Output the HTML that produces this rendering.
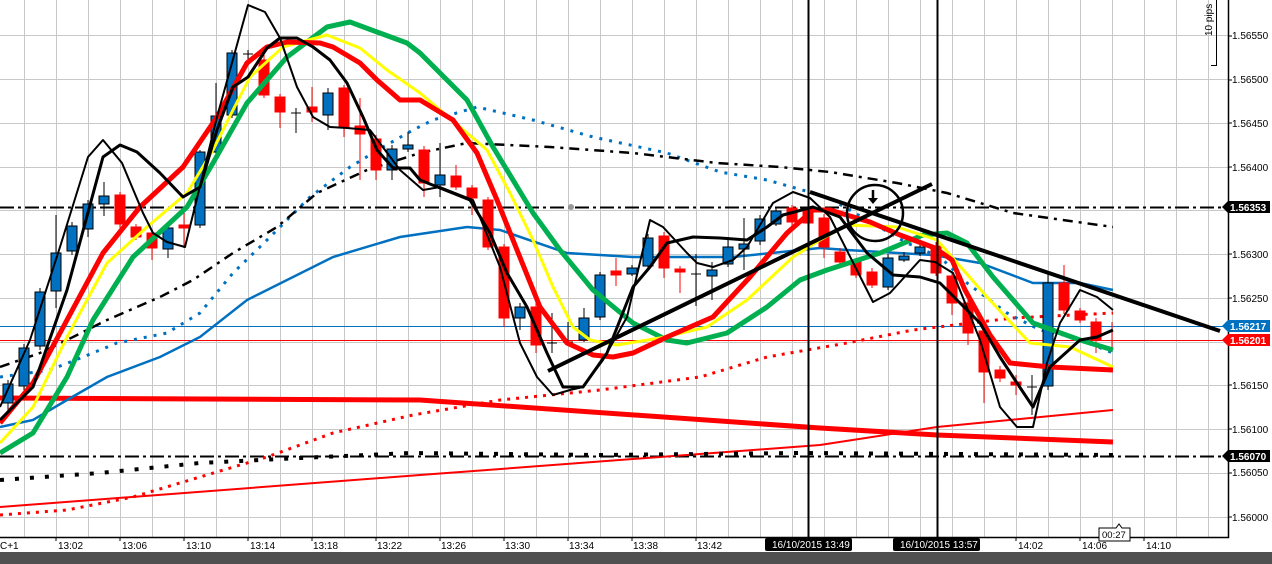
<!DOCTYPE html>
<html><head><meta charset="utf-8"><style>
html,body{margin:0;padding:0;background:#fff;width:1272px;height:564px;overflow:hidden}
svg{display:block;font-family:"Liberation Sans",sans-serif}
</style></head><body>
<svg width="1272" height="564" viewBox="0 0 1272 564" xmlns="http://www.w3.org/2000/svg">
<rect width="1272" height="564" fill="#fff"/>
<!-- grid -->
<g stroke="#c8c8c8" stroke-width="1">
<path d="M24.5 0V537M56.5 0V537M88.5 0V537M120.5 0V537M152.5 0V537M184.5 0V537M216.5 0V537M248.5 0V537M280.5 0V537M312.5 0V537M344.5 0V537M376.5 0V537M408.5 0V537M440.5 0V537M472.5 0V537M504.5 0V537M536.5 0V537M568.5 0V537M600.5 0V537M632.5 0V537M664.5 0V537M696.5 0V537M728.5 0V537M760.5 0V537M792.5 0V537M824.5 0V537M856.5 0V537M888.5 0V537M920.5 0V537M952.5 0V537M984.5 0V537M1016.5 0V537M1048.5 0V537M1080.5 0V537M1112.5 0V537M1144.5 0V537M1176.5 0V537M1208.5 0V537"/>
<path d="M0 35.5H1228M0 79.5H1228M0 123.5H1228M0 167.5H1228M0 210.5H1228M0 254.5H1228M0 298.5H1228M0 342.5H1228M0 385.5H1228M0 429.5H1228M0 473.5H1228M0 517.5H1228"/>
</g>
<!-- horizontal level lines -->
<path d="M0 207.5H1228" stroke="#000" stroke-width="2" stroke-dasharray="14 4 3 4"/>
<path d="M0 456.5H1228" stroke="#000" stroke-width="2" stroke-dasharray="14 4 3 4"/>
<path d="M0 326.5H1228" stroke="#0070c0" stroke-width="1"/>
<path d="M0 340.5H1228" stroke="#ff0000" stroke-width="1"/>
<circle cx="571" cy="207" r="3" fill="#999"/>
<!-- red thin rising, red thick flat -->
<polyline fill="none" stroke="#ff0000" stroke-width="2" points="0,507 420,475 820,445 937,427 1113,410"/>
<polyline fill="none" stroke="#ff0000" stroke-width="5" points="0,398 420,400 820,428 937,435 1113,442"/>
<!-- red dotted -->
<polyline fill="none" stroke="#ff0000" stroke-width="3" stroke-dasharray="3 6" points="0,515 67,510 133,497 200,477 267,457 333,433 413,415 500,400 600,390 700,377 767,357 847,343 913,330 1013,318 1113,313"/>
<!-- black square dotted -->
<polyline fill="none" stroke="#000" stroke-width="4" stroke-dasharray="4 11" points="0,480 100,473 200,463 300,458 410,453 600,455 800,453 1113,455"/>
<!-- blue solid MA -->
<polyline fill="none" stroke="#0070c0" stroke-width="2.5" points="0,427 33,420 67,400 107,377 160,357 200,337 247,300 333,257 400,237 467,227 500,230 567,253 633,257 733,257 820,248 847,250 933,255 980,263 1033,283 1080,283 1113,290"/>
<!-- blue dotted -->
<polyline fill="none" stroke="#0070c0" stroke-width="3" stroke-dasharray="3 7" points="0,377 50,370 83,357 117,343 167,333 200,313 233,273 267,240 310,197 350,167 383,147 413,130 433,120 477,107 533,120 593,137 667,153 720,172 767,180 827,197 867,220 907,243 940,257 967,283 1007,313 1040,330 1073,337 1113,353"/>
<!-- black dashed -->
<polyline fill="none" stroke="#000" stroke-width="2.5" stroke-dasharray="10 6 3 6" points="0,367 40,353 67,340 107,320 160,297 193,280 233,253 277,227 317,193 367,170 420,153 467,143 550,147 633,153 717,163 780,167 830,172 897,183 947,193 1013,213 1113,227"/>
<!-- candles -->
<g stroke-width="1">
<g stroke="#000" fill="#0070c0">
<path d="M8 380V410M24 344V390M40 288V350M56 215V308M72 222V255M88 200V237M104 182V216M168 224V258M200 150V228M216 83V155M232 50V118M328 88V130M392 145V180M408 132V152M440 143V197M520 303V330M584 308V342M600 272V320M632 265V276M648 234V270M712 262V300M728 237V267M744 218V270M760 215V245M776 208V226M888 254V290M904 252V262M920 244V256M1048 272V390"/>
<rect x="3" y="384" width="10" height="19"/><rect x="19" y="348" width="10" height="38"/><rect x="35" y="292" width="10" height="54"/><rect x="51" y="253" width="10" height="38"/><rect x="67" y="226" width="10" height="25"/><rect x="83" y="204" width="10" height="25"/><rect x="99" y="196" width="10" height="8"/><rect x="163" y="228" width="10" height="21"/><rect x="195" y="152" width="10" height="73"/><rect x="211" y="116" width="10" height="36"/><rect x="227" y="53" width="10" height="62"/><rect x="323" y="93" width="10" height="22"/><rect x="387" y="149" width="10" height="21"/><rect x="403" y="145" width="10" height="4"/><rect x="435" y="175" width="10" height="10"/><rect x="515" y="307" width="10" height="11"/><rect x="579" y="318" width="10" height="22"/><rect x="595" y="275" width="10" height="42"/><rect x="627" y="268" width="10" height="6"/><rect x="643" y="238" width="10" height="28"/><rect x="707" y="270" width="10" height="6"/><rect x="723" y="247" width="10" height="17"/><rect x="739" y="244" width="10" height="5"/><rect x="755" y="219" width="10" height="22"/><rect x="771" y="211" width="10" height="13"/><rect x="883" y="258" width="10" height="29"/><rect x="899" y="256" width="10" height="4"/><rect x="915" y="247" width="10" height="6"/><rect x="1043" y="283" width="10" height="103"/>
</g>
<g stroke="#ff0000" fill="#ff0000">
<path d="M120 192V228M136 224V240M152 230V260M184 213V248M264 55V98M280 94V128M312 87V122M344 85V137M360 98V180M376 135V180M424 146V197M456 165V190M472 185V215M488 197V250M504 244V327M536 303V353M616 258V286M664 232V278M680 266V293M792 205V226M808 207V226M824 214V258M840 248V265M856 258V278M872 268V288M936 242V276M952 272V315M968 300V345M984 328V403M1000 366V382M1016 375V395M1064 265V314M1080 308V323M1096 318V353M1112 322V352"/>
<rect x="115" y="195" width="10" height="29"/><rect x="131" y="227" width="10" height="10"/><rect x="147" y="233" width="10" height="15"/><rect x="179" y="225" width="10" height="3"/><rect x="259" y="60" width="10" height="35"/><rect x="275" y="97" width="10" height="15"/><rect x="307" y="107" width="10" height="5"/><rect x="339" y="88" width="10" height="39"/><rect x="355" y="126" width="10" height="8"/><rect x="371" y="139" width="10" height="31"/><rect x="419" y="150" width="10" height="33"/><rect x="451" y="176" width="10" height="11"/><rect x="467" y="188" width="10" height="10"/><rect x="483" y="200" width="10" height="47"/><rect x="499" y="247" width="10" height="71"/><rect x="531" y="307" width="10" height="38"/><rect x="611" y="271" width="10" height="4"/><rect x="659" y="236" width="10" height="32"/><rect x="675" y="269" width="10" height="3"/><rect x="787" y="208" width="10" height="14"/><rect x="803" y="210" width="10" height="13"/><rect x="819" y="218" width="10" height="29"/><rect x="835" y="252" width="10" height="10"/><rect x="851" y="262" width="10" height="13"/><rect x="867" y="272" width="10" height="13"/><rect x="931" y="246" width="10" height="27"/><rect x="947" y="276" width="10" height="27"/><rect x="963" y="303" width="10" height="30"/><rect x="979" y="331" width="10" height="41"/><rect x="995" y="370" width="10" height="8"/><rect x="1011" y="382" width="10" height="3"/><rect x="1059" y="283" width="10" height="27"/><rect x="1075" y="311" width="10" height="9"/><rect x="1091" y="322" width="10" height="18"/>
</g>
<g stroke="#000"><path d="M243 54H253M248 50V60M291 113H301M296 108V133M547 343H557M552 313V353M563 342H573M568 322V342M691 274H701M696 254V306M1027 387H1037M1032 375V415"/></g>
</g>
<!-- MAs -->
<polyline fill="none" stroke="#00b050" stroke-width="5" stroke-linejoin="round" points="0,453 33,433 67,377 93,320 133,257 187,207 213,163 247,103 287,57 327,27 350,22 377,32 407,43 420,53 467,100 493,147 533,213 560,250 593,290 633,323 667,340 687,343 727,333 767,307 800,280 827,270 880,253 923,235 947,233 967,243 993,277 1033,323 1080,340 1113,350"/>
<polyline fill="none" stroke="#ffff00" stroke-width="3" stroke-linejoin="round" points="0,443 33,407 67,337 107,263 147,227 187,193 213,150 233,110 250,77 283,47 327,35 360,48 387,70 420,93 467,133 487,150 510,193 533,240 553,287 573,327 590,340 617,345 660,338 707,327 747,300 793,257 820,240 847,225 897,227 937,240 987,297 1030,343 1070,347 1113,367"/>
<polyline fill="none" stroke="#ff0000" stroke-width="5" stroke-linejoin="round" points="0,423 33,383 67,320 103,253 140,207 183,167 217,117 247,63 267,47 287,42 320,43 333,47 360,63 377,80 400,100 420,100 453,120 477,153 497,200 517,250 540,307 567,343 593,355 613,357 633,353 667,337 713,317 750,277 787,233 813,210 830,210 870,222 900,235 935,248 952,260 965,290 990,335 1010,363 1050,367 1113,370"/>
<!-- black zigzags -->
<polyline fill="none" stroke="#000" stroke-width="2" stroke-linejoin="round" points="0,407 30,340 60,247 88,157 103,140 122,163 143,213 153,233 167,242 185,247 217,117 248,5 265,12 280,38 297,87 313,117 330,127 347,128 370,130 400,170 423,190 440,187 473,200 500,267 520,343 537,377 553,395 570,390 583,387 603,360 627,317 650,220 663,227 687,253 697,263 713,267 733,260 747,247 773,203 793,192 810,198 830,217 873,302 890,293 920,260 935,262 953,273 980,340 1000,407 1017,427 1033,427 1047,363 1060,323 1080,290 1097,297 1113,310"/>
<polyline fill="none" stroke="#000" stroke-width="3" stroke-linejoin="round" points="0,420 33,387 67,290 103,157 120,145 137,152 160,173 183,197 200,187 217,130 233,87 248,77 267,48 280,38 297,38 313,47 330,60 347,83 363,117 377,150 393,168 410,168 420,180 470,200 490,233 507,273 527,307 547,353 563,387 583,387 607,353 633,287 650,267 667,243 693,237 720,238 747,240 767,227 783,215 813,207 840,217 867,253 893,275 920,277 940,283 960,303 980,323 1000,357 1017,383 1033,407 1050,367 1080,340 1097,337 1113,330"/>
<!-- trend lines -->
<path d="M548 371L932 184" stroke="#000" stroke-width="4"/>
<path d="M810 192L1220 331" stroke="#000" stroke-width="4"/>
<circle cx="875" cy="213" r="28" fill="none" stroke="#000" stroke-width="2.5"/>
<path d="M873 190V200" stroke="#000" stroke-width="2.5"/><path d="M868 198L873 204L878 198Z" fill="#000"/>
<!-- vertical lines -->
<path d="M808.5 0V537M937.5 0V537" stroke="#000" stroke-width="2"/>
<!-- axes -->
<rect x="1229" y="0" width="43" height="552" fill="#fff"/>
<rect x="0" y="538" width="1229" height="14" fill="#fff"/>
<path d="M1228.5 0V537.5H0" stroke="#000" stroke-width="1.5" fill="none"/>
<path d="M1211 65.5H1216.5V0" stroke="#000" fill="none"/>
<text transform="translate(1212,36) rotate(-90)" font-size="10" fill="#000">10 pips</text>
<g font-size="10" fill="#000">
<text x="1232" y="39">1.56550</text><text x="1232" y="83">1.56500</text><text x="1232" y="127">1.56450</text><text x="1232" y="171">1.56400</text><text x="1232" y="258">1.56300</text><text x="1232" y="302">1.56250</text><text x="1232" y="389">1.56150</text><text x="1232" y="433">1.56100</text><text x="1232" y="476">1.56050</text><text x="1232" y="521">1.56000</text>
</g>
<path d="M1229 36H1232M1229 80H1232M1229 123H1232M1229 167H1232M1229 254H1232M1229 298H1232M1229 385H1232M1229 429H1232M1229 473H1232M1229 517H1232" stroke="#000"/>
<g font-size="10" font-weight="bold">
<path d="M1222 207L1228 201H1270V213H1228Z" fill="#000"/><text x="1230" y="211" fill="#fff">1.56353</text>
<path d="M1222 326L1228 320H1270V332H1228Z" fill="#0070c0"/><text x="1230" y="330" fill="#fff">1.56217</text>
<path d="M1222 340L1228 334H1270V346H1228Z" fill="#ff0000"/><text x="1230" y="344" fill="#fff">1.56201</text>
<path d="M1222 456L1228 450H1270V462H1228Z" fill="#000"/><text x="1230" y="460" fill="#fff">1.56070</text>
</g>
<g font-size="10" fill="#000">
<text x="0" y="549">C+1</text>
<text x="58" y="549">13:02</text><text x="122" y="549">13:06</text><text x="186" y="549">13:10</text><text x="250" y="549">13:14</text><text x="313" y="549">13:18</text><text x="377" y="549">13:22</text><text x="441" y="549">13:26</text><text x="505" y="549">13:30</text><text x="569" y="549">13:34</text><text x="633" y="549">13:38</text><text x="697" y="549">13:42</text><text x="1018" y="549">14:02</text><text x="1082" y="549">14:06</text><text x="1146" y="549">14:10</text>
</g>
<path d="M56 538V541M120 538V541M184 538V541M248 538V541M312 538V541M376 538V541M440 538V541M504 538V541M568 538V541M632 538V541M696 538V541M1016 538V541M1080 538V541M1144 538V541" stroke="#000"/>
<rect x="765" y="538" width="87" height="13" rx="2" fill="#000"/><text x="772" y="548" font-size="10" fill="#fff">16/10/2015 13:49</text>
<rect x="893" y="538" width="87" height="13" rx="2" fill="#000"/><text x="900" y="548" font-size="10" fill="#fff">16/10/2015 13:57</text>
<path d="M1099 528H1116L1119 524L1122 528H1130V541H1099Z" fill="#fff" stroke="#000"/><text x="1102" y="538" font-size="9.5" fill="#000">00:27</text>
<rect x="0" y="552" width="1272" height="12" fill="#505050"/>
</svg>
</body></html>
